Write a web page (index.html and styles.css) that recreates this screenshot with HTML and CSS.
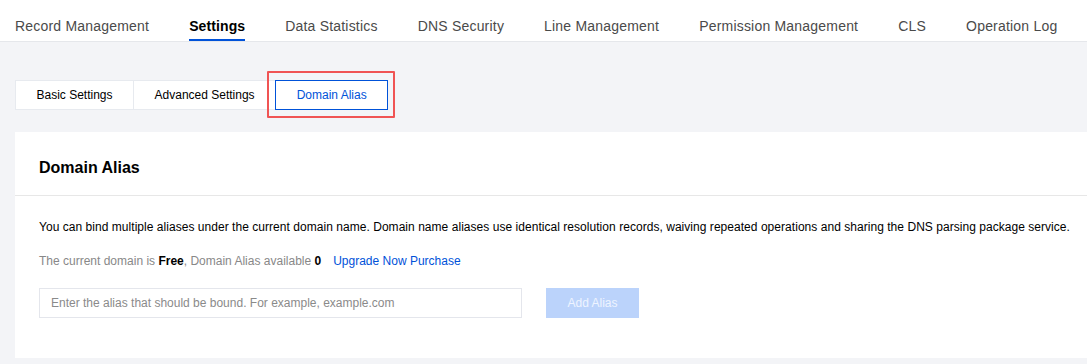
FILE: index.html
```html
<!DOCTYPE html>
<html lang="en">
<head>
<meta charset="utf-8">
<title>Domain Alias</title>
<link rel="stylesheet" href="styles.css">
</head>
<body>
<nav class="topnav">
  <a class="nav-item">Record Management</a>
  <a class="nav-item active">Settings</a>
  <a class="nav-item">Data Statistics</a>
  <a class="nav-item">DNS Security</a>
  <a class="nav-item">Line Management</a>
  <a class="nav-item">Permission Management</a>
  <a class="nav-item">CLS</a>
  <a class="nav-item">Operation Log</a>
</nav>
<main class="content">
  <div class="seg-tabs">
    <div class="seg-tab">Basic Settings</div>
    <div class="seg-tab">Advanced Settings</div>
    <div class="seg-tab selected highlighted">Domain Alias</div>
  </div>
  <section class="card">
    <header class="card-head">Domain Alias</header>
    <div class="card-body">
      <p class="desc">You can bind multiple aliases under the current domain name. Domain name aliases use identical resolution records, waiving repeated operations and sharing the DNS parsing package service.</p>
      <p class="quota">The current domain is <b class="strong">Free</b>, Domain Alias available <b class="strong num">0</b><a class="link">Upgrade Now Purchase</a></p>
      <div class="form-row">
        <input class="alias-input" type="text" placeholder="Enter the alias that should be bound. For example, example.com">
        <button class="btn-primary" disabled>Add Alias</button>
      </div>
    </div>
  </section>
</main>
</body>
</html>
```

FILE: styles.css
```css
* { box-sizing: border-box; }
html, body {
  margin: 0;
  padding: 0;
  background: #f3f4f7;
  font-family: "Liberation Sans", Arial, Helvetica, sans-serif;
  color: #000;
}
.topnav {
  display: flex;
  gap: 40px;
  height: 42px;
  padding-left: 15px;
  background: #fff;
  border-bottom: 1px solid #e5e7eb;
}
.nav-item {
  display: block;
  height: 41px;
  padding-top: 16px;
  line-height: 20px;
  font-size: 14px;
  letter-spacing: 0.2px;
  color: #4a4a4a;
  border-bottom: 2px solid transparent;
  white-space: nowrap;
}
.nav-item.active {
  color: #000;
  font-weight: bold;
  letter-spacing: 0.1px;
  border-bottom-color: #0052d9;
}
.content {
  padding: 38px 0 0 15px;
}
.seg-tabs {
  display: flex;
}
.seg-tab {
  height: 30px;
  padding: 0 20.5px;
  display: flex;
  align-items: center;
  font-size: 12px;
  color: #000;
  background: #fff;
  border: 1px solid #e7eaef;
  margin-left: -1px;
}
.seg-tab:first-child { margin-left: 0; }
.seg-tab.selected {
  color: #0052d9;
  border-color: #0052d9;
  position: relative;
  min-width: 113px;
  justify-content: center;
}
.seg-tab.highlighted::after {
  content: "";
  position: absolute;
  top: -10px;
  left: -9px;
  right: -8px;
  bottom: -9px;
  border: 2px solid #f05454;
  border-radius: 1px;
}
.card {
  margin-top: 22px;
  background: #fff;
}
.card-head {
  height: 64px;
  display: flex;
  align-items: center;
  padding: 8px 24px 0;
  font-size: 16px;
  font-weight: bold;
  color: #000;
  border-bottom: 1px solid #e7e7e7;
}
.card-body {
  padding: 21px 24px 40px;
}
.desc {
  margin: 0;
  font-size: 12px;
  line-height: 20px;
  letter-spacing: 0.04px;
  white-space: nowrap;
  color: #000;
}
.quota {
  margin: 14px 0 0;
  font-size: 12px;
  line-height: 20px;
  color: #888;
}
.strong {
  color: #000;
  font-weight: 600;
}
.num { font-weight: bold; }
.link {
  margin-left: 12px;
  color: #0052d9;
}
.form-row {
  display: flex;
  gap: 24px;
  margin-top: 17px;
}
.alias-input {
  width: 483px;
  height: 30px;
  padding: 0 11px;
  border: 1px solid #e4e6ec;
  border-radius: 0;
  font-family: "Liberation Sans", Arial, sans-serif;
  font-size: 12px;
  color: #000;
  outline: none;
}
.alias-input::placeholder { color: #8a8a8a; }
.btn-primary {
  width: 93px;
  height: 30px;
  border: 0;
  background: #bbd3fb;
  color: #eef4ff;
  font-family: "Liberation Sans", Arial, sans-serif;
  font-size: 12px;
  padding: 0;
}
```
